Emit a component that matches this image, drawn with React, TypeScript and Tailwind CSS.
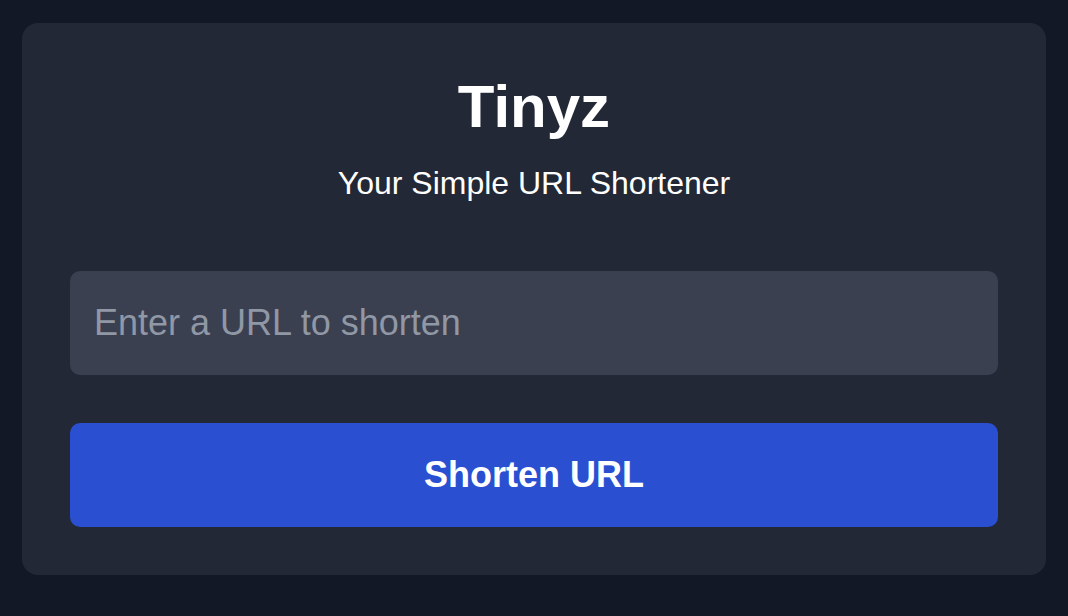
export default function App() {
  return (
    <div
      className="min-h-screen bg-[#121826] px-[22px] pt-[23px] pb-[41px]"
      style={{ fontFamily: '"Liberation Sans", Arial, sans-serif' }}
    >
      <div className="rounded-2xl bg-[#222836] px-12 pt-12 pb-12">
        <h1 className="text-center text-[60px] font-bold leading-[72px] text-white">Tinyz</h1>
        <p className="mt-5 text-center text-[32px] leading-[40px] text-white">Your Simple URL Shortener</p>
        <input
          type="text"
          placeholder="Enter a URL to shorten"
          className="mt-[68px] block h-[104px] w-full rounded-[10px] bg-[#3b4050] px-6 text-[36px] text-white outline-none placeholder:text-[#9097a5]"
        />
        <button className="mt-12 block h-[104px] w-full rounded-[10px] bg-[#2a4fd1] text-[36px] font-bold text-white">
          Shorten URL
        </button>
      </div>
    </div>
  );
}
